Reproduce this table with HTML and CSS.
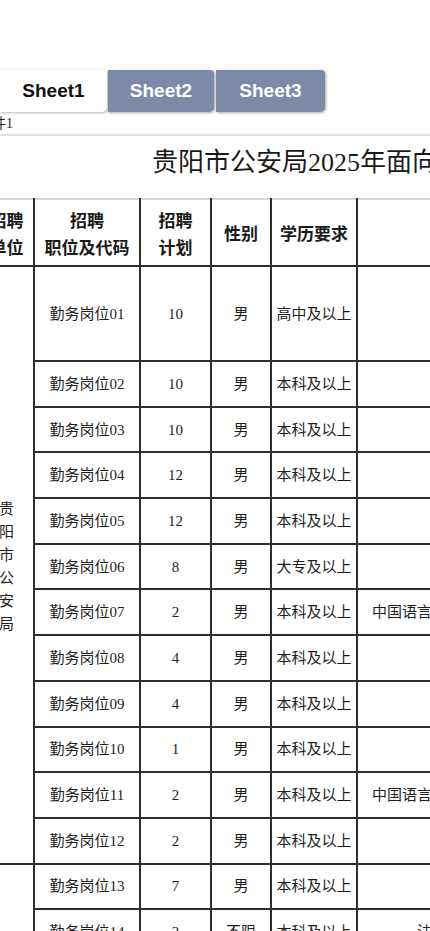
FILE: index.html
```html
<!DOCTYPE html>
<html lang="zh-CN">
<head>
<meta charset="utf-8">
<title>贵阳市公安局2025年招聘</title>
<link rel="stylesheet" href="styles.css">
</head>
<body>
<div class="tabs">
  <div class="tab tab-active">Sheet1</div>
  <div class="tab">Sheet2</div>
  <div class="tab tab-last">Sheet3</div>
</div>
<div class="sheet">
  <div class="note">附件1</div>
  <div class="title">贵阳市公安局2025年面向社会公开招聘警务辅助人员岗位表</div>
  <table class="grid">
    <colgroup>
      <col class="c1"><col class="c2"><col class="c3"><col class="c4"><col class="c5"><col class="c6"><col class="c7"><col class="c8">
    </colgroup>
    <tr class="r-head">
      <th>招聘<br>单位</th>
      <th>招聘<br>职位及代码</th>
      <th>招聘<br>计划</th>
      <th>性别</th>
      <th>学历要求</th>
      <th colspan="2">其他资格条件</th>
      <th>备注</th>
    </tr>
    <tr class="r-tall">
      <td rowspan="12" class="unit"><span class="vtext">贵阳市公安局</span></td>
      <td>勤务岗位01</td><td>10</td><td>男</td><td>高中及以上</td><td></td><td></td><td></td>
    </tr>
    <tr class="r"><td>勤务岗位02</td><td>10</td><td>男</td><td>本科及以上</td><td></td><td></td><td></td></tr>
    <tr class="r"><td>勤务岗位03</td><td>10</td><td>男</td><td>本科及以上</td><td></td><td></td><td></td></tr>
    <tr class="r"><td>勤务岗位04</td><td>12</td><td>男</td><td>本科及以上</td><td></td><td></td><td></td></tr>
    <tr class="r"><td>勤务岗位05</td><td>12</td><td>男</td><td>本科及以上</td><td></td><td></td><td></td></tr>
    <tr class="r"><td>勤务岗位06</td><td>8</td><td>男</td><td>大专及以上</td><td></td><td></td><td></td></tr>
    <tr class="r"><td>勤务岗位07</td><td>2</td><td>男</td><td>本科及以上</td><td>中国语言文学类专业</td><td></td><td></td></tr>
    <tr class="r"><td>勤务岗位08</td><td>4</td><td>男</td><td>本科及以上</td><td></td><td></td><td></td></tr>
    <tr class="r"><td>勤务岗位09</td><td>4</td><td>男</td><td>本科及以上</td><td></td><td></td><td></td></tr>
    <tr class="r"><td>勤务岗位10</td><td>1</td><td>男</td><td>本科及以上</td><td></td><td></td><td></td></tr>
    <tr class="r"><td>勤务岗位11</td><td>2</td><td>男</td><td>本科及以上</td><td>中国语言文学类专业</td><td></td><td></td></tr>
    <tr class="r"><td>勤务岗位12</td><td>2</td><td>男</td><td>本科及以上</td><td></td><td></td><td></td></tr>
    <tr class="r">
      <td rowspan="8" class="unit"><span class="vtext">贵阳市公安局</span></td>
      <td>勤务岗位13</td><td>7</td><td>男</td><td>本科及以上</td><td></td><td></td><td></td>
    </tr>
    <tr class="r"><td>勤务岗位14</td><td>2</td><td>不限</td><td>本科及以上</td><td>法学类</td><td></td><td></td></tr>
    <tr class="r"><td>勤务岗位15</td><td>3</td><td>男</td><td>本科及以上</td><td></td><td></td><td></td></tr>
    <tr class="r"><td>勤务岗位16</td><td>3</td><td>男</td><td>本科及以上</td><td></td><td></td><td></td></tr>
    <tr class="r"><td>勤务岗位17</td><td>2</td><td>男</td><td>本科及以上</td><td></td><td></td><td></td></tr>
    <tr class="r"><td>勤务岗位18</td><td>2</td><td>男</td><td>本科及以上</td><td></td><td></td><td></td></tr>
    <tr class="r"><td>勤务岗位19</td><td>2</td><td>男</td><td>本科及以上</td><td></td><td></td><td></td></tr>
    <tr class="r"><td>勤务岗位20</td><td>2</td><td>男</td><td>本科及以上</td><td></td><td></td><td></td></tr>
  </table>
</div>
</body>
</html>
```

FILE: styles.css
```css
html, body {
  margin: 0;
  padding: 0;
  background: #ffffff;
  overflow: hidden;
}

body {
  width: 430px;
  height: 931px;
  font-family: "Liberation Serif", "Noto Sans CJK SC", serif;
  color: #1a1a1a;
}

.tabs {
  display: flex;
  padding-top: 70px;
  height: 42px;
}

.tab {
  height: 42px;
  line-height: 42px;
  text-align: center;
  font-family: "Liberation Sans", Arial, sans-serif;
  font-weight: bold;
  font-size: 19px;
  color: #ffffff;
  background: #7b8aa7;
  border-radius: 0 4px 5px 0;
  box-shadow: 1px 1px 3px rgba(0, 0, 0, 0.35);
  width: 106px;
  margin-right: 2px;
}

.tab-active {
  width: 107px;
  margin-right: 1px;
  background: #ffffff;
  color: #111111;
  box-shadow: 1px 1px 3px rgba(0, 0, 0, 0.3);
}

.tab-last {
  width: 109px;
}

.sheet {
  margin-left: -22px;
  width: 1024px;
}

.note {
  padding-top: 2px;
  height: 20px;
  line-height: 20px;
  font-size: 14px;
  border-bottom: 2px solid #dedeec;
}

.title {
  height: 62px;
  line-height: 54px;
  text-align: center;
  font-size: 26px;
  color: #1a1a1a;
  white-space: nowrap;
}

.grid {
  border-collapse: collapse;
  table-layout: fixed;
  width: 1024px;
}

.c1 { width: 55px; }
.c2 { width: 106px; }
.c3 { width: 71px; }
.c4 { width: 60px; }
.c5 { width: 86px; }
.c6 { width: 165px; }
.c7 { width: 305px; }
.c8 { width: 176px; }

.grid th,
.grid td {
  border: 2px solid #2e2e2e;
  padding: 0;
  text-align: center;
  vertical-align: middle;
}

.grid th {
  border-top-color: #d6d6de;
  font-family: "Noto Sans CJK SC", sans-serif;
  font-weight: bold;
  font-size: 17px;
  line-height: 27px;
  color: #1a1a1a;
}

.grid td {
  font-size: 15px;
  line-height: 20px;
  color: #1e1e1e;
  white-space: nowrap;
}

.r-head { height: 67px; }
.r-tall { height: 95px; }
.r { height: 45.7px; }

.grid td.unit {
  white-space: normal;
}

.vtext {
  display: inline-block;
  width: 15px;
  word-break: break-all;
  line-height: 23px;
  font-family: "Noto Sans CJK SC", sans-serif;
}
```
